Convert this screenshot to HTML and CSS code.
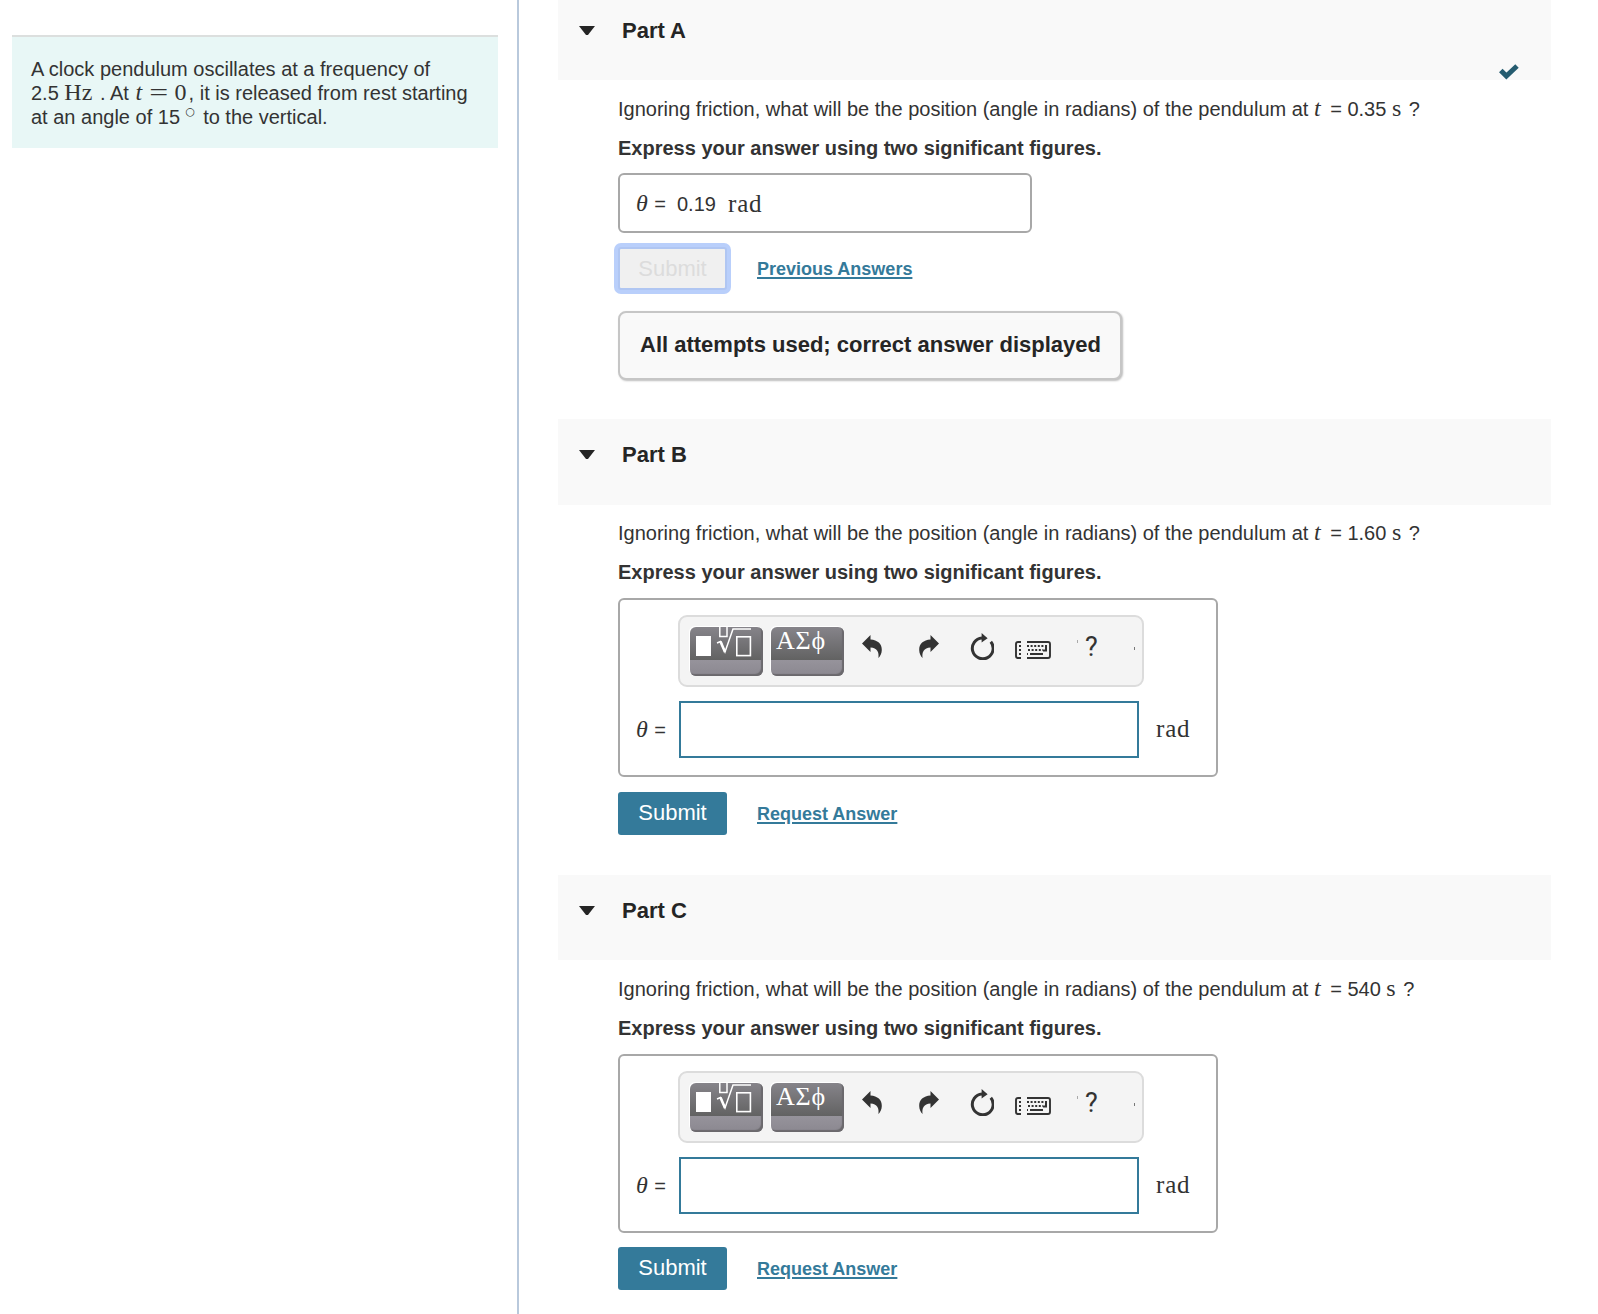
FILE: index.html
```html
<!DOCTYPE html>
<html lang="en">
<head>
    <meta charset="UTF-8">
    <meta name="viewport" content="width=device-width, initial-scale=1.0">
    <title>Clock Pendulum</title>
    <link rel="stylesheet" href="styles.css">
</head>
<body>
    <!-- Shared toolbar icons -->
    <svg class="sprite" width="0" height="0">
        <symbol id="icon-undo" viewBox="0 0 20 23">
            <path d="M0 8.5 L8.5 0 V4.6 C15.5 5 20 9 19.8 15 C19.7 18.4 18.4 21 16.4 23 C17.3 17.5 15.2 12.7 8.5 12.6 V17 Z"/>
        </symbol>
        <symbol id="icon-reset" viewBox="0 0 24 27">
            <path d="M12 5 A10.4 10.4 0 1 0 20.8 8.8" fill="none" stroke="#333" stroke-width="3"/>
            <path d="M11.6 0 L17.6 5.2 L11.6 9.6 Z"/>
        </symbol>
        <symbol id="icon-keyboard" viewBox="0 0 36 18">
            <path d="M6 1 H3 Q1 1 1 3 V15 Q1 17 3 17 H6 M12 1 H33 Q35 1 35 3 V15 Q35 17 33 17 H12" fill="none" stroke="#333" stroke-width="1.9"/>
            <path d="M4 5 H6 M12 5 H29 M4 9 H6 M13 9 H28 M4 13 H6 M12 13 H13" fill="none" stroke="#333" stroke-width="2" stroke-dasharray="2 1.6"/>
            <path d="M15 13 H28 M31 4 V9.5 H28" fill="none" stroke="#333" stroke-width="2"/>
        </symbol>
        <symbol id="icon-template" viewBox="0 0 72 48">
            <rect x="6" y="9" width="15" height="20" fill="#fff"/>
            <path d="M29.8 -1 V9.5 H37 V-1 M27 16 L30.5 14.5 L35 25 L43 2 H61" fill="none" stroke="#fff" stroke-width="1.5"/>
            <path d="M30.5 14.5 L35 25" fill="none" stroke="#fff" stroke-width="2.6"/>
            <rect x="46.8" y="9.8" width="13.6" height="18.8" fill="none" stroke="#fff" stroke-width="1.6"/>
        </symbol>
    </svg>

    <div class="problem">
        <div class="intro">
            A clock pendulum oscillates at a frequency of<br>
            2.5 <span class="math hz">Hz</span> . At <span class="math zero"><i>t</i><span class="eq">=</span>0</span>, it is released from rest starting<br>
            at an angle of 15 <span class="degree">&#9675;</span> to the vertical.
        </div>
    </div>

    <div class="parts">
        <div class="part">
            <div class="part-header first">
                <span class="arrow"></span>
                <h2>Part A</h2>
                <svg class="check" width="20" height="16" viewBox="0 0 20 16"><path d="M1.8 6.4 L7.4 12 L18 2" fill="none" stroke="#255c70" stroke-width="5"/></svg>
            </div>
            <div class="part-body">
                <p class="question">Ignoring friction, what will be the position (angle in radians) of the pendulum at <i class="math var">t</i> = 0.35 <span class="math sec">s</span> ?</p>
                <p class="hint">Express your answer using two significant figures.</p>
                <div class="answer-box given">
                    <span class="label"><i class="math theta">&theta;</i> =</span>
                    <span class="value">0.19</span>
                    <span class="math unit">rad</span>
                </div>
                <div class="actions">
                    <button class="submit" disabled>Submit</button>
                    <a href="#">Previous Answers</a>
                </div>
                <div class="feedback">All attempts used; correct answer displayed</div>
            </div>
        </div>

        <div class="part part-b">
            <div class="part-header">
                <span class="arrow"></span>
                <h2>Part B</h2>
            </div>
            <div class="part-body">
                <p class="question">Ignoring friction, what will be the position (angle in radians) of the pendulum at <i class="math var">t</i> = 1.60 <span class="math sec">s</span> ?</p>
                <p class="hint">Express your answer using two significant figures.</p>
                <div class="answer-box entry">
                    <div class="toolbar">
                        <div class="key"><svg width="72" height="48"><use href="#icon-template"/></svg></div>
                        <div class="key greek">&Alpha;&Sigma;&#981;</div>
                        <svg class="undo" width="20" height="23"><use href="#icon-undo"/></svg>
                        <svg class="redo" width="20" height="23"><use href="#icon-undo"/></svg>
                        <svg class="reset" width="24" height="27"><use href="#icon-reset"/></svg>
                        <svg class="keyboard" width="36" height="18"><use href="#icon-keyboard"/></svg>
                        <span class="tick"></span>
                        <span class="help">?</span>
                        <span class="tick last"></span>
                    </div>
                    <div class="entry-row">
                        <span class="label"><i class="math theta">&theta;</i> =</span>
                        <input type="text">
                        <span class="math unit">rad</span>
                    </div>
                </div>
                <div class="actions">
                    <button class="submit">Submit</button>
                    <a href="#">Request Answer</a>
                </div>
            </div>
        </div>

        <div class="part part-c">
            <div class="part-header">
                <span class="arrow"></span>
                <h2>Part C</h2>
            </div>
            <div class="part-body">
                <p class="question">Ignoring friction, what will be the position (angle in radians) of the pendulum at <i class="math var">t</i> = 540 <span class="math sec">s</span> ?</p>
                <p class="hint">Express your answer using two significant figures.</p>
                <div class="answer-box entry">
                    <div class="toolbar">
                        <div class="key"><svg width="72" height="48"><use href="#icon-template"/></svg></div>
                        <div class="key greek">&Alpha;&Sigma;&#981;</div>
                        <svg class="undo" width="20" height="23"><use href="#icon-undo"/></svg>
                        <svg class="redo" width="20" height="23"><use href="#icon-undo"/></svg>
                        <svg class="reset" width="24" height="27"><use href="#icon-reset"/></svg>
                        <svg class="keyboard" width="36" height="18"><use href="#icon-keyboard"/></svg>
                        <span class="tick"></span>
                        <span class="help">?</span>
                        <span class="tick last"></span>
                    </div>
                    <div class="entry-row">
                        <span class="label"><i class="math theta">&theta;</i> =</span>
                        <input type="text">
                        <span class="math unit">rad</span>
                    </div>
                </div>
                <div class="actions">
                    <button class="submit">Submit</button>
                    <a href="#">Request Answer</a>
                </div>
            </div>
        </div>
    </div>
</body>
</html>
```
FILE: styles.css
```css
* {
    margin: 0;
    padding: 0;
    box-sizing: border-box;
}

body {
    display: flex;
    height: 1314px;
    overflow: hidden;
    background-color: #FFF;
    color: #333;
    font-family: "Liberation Sans", Arial, sans-serif;
    font-size: 20px;
    line-height: 24px;
}

.sprite {
    position: absolute;
}

.math {
    font-family: "Liberation Serif", "Times New Roman", serif;
    font-size: 24px;
    line-height: 20px;
}

/* Problem statement */
.problem {
    width: 519px;
    flex: none;
    padding: 35px 19px 0 12px;
    border-right: 2px solid #B9C9DC;
}

.intro {
    height: 113px;
    padding: 20px 0 0 19px;
    border-top: 2px solid #DCDFDE;
    background-color: #E8F7F6;
    white-space: nowrap;
}

.hz {
    margin-right: 2px;
}

.zero {
    margin: 0 2px 0 1px;
}

.eq {
    display: inline-block;
    margin: 0 9px 0 10px;
    transform: scaleX(1.4);
}

.degree {
    display: inline-block;
    width: 12px;
    font-family: "DejaVu Sans", sans-serif;
    font-size: 11px;
    line-height: 10px;
    vertical-align: 9px;
}

/* Parts */
.parts {
    width: 993px;
    margin-left: 39px;
}

.part-header {
    position: relative;
    display: flex;
    height: 86px;
    padding: 23px 0 0 21px;
    background-color: #F9F9F9;
}

.part-header.first {
    height: 80px;
    padding-top: 18px;
}

.arrow {
    width: 16px;
    height: 9px;
    margin-top: 8px;
    background-color: #252525;
    clip-path: polygon(0 0, 100% 0, 56% 100%, 44% 100%);
}

h2 {
    margin-left: 27px;
    color: #252525;
    font-size: 22px;
    line-height: 25px;
}

.check {
    position: absolute;
    right: 32px;
    bottom: 0;
}

.part-body {
    padding: 17px 0 0 60px;
}

.question {
    height: 24px;
    white-space: nowrap;
}

.var {
    margin-right: 4px;
}

.sec {
    margin-right: 2px;
}

.hint {
    margin-top: 15px;
    font-weight: bold;
}

.answer-box {
    border: 2px solid #A8A8A8;
    border-radius: 6px;
}

.given {
    display: flex;
    align-items: center;
    width: 414px;
    height: 60px;
    margin-top: 13px;
    padding: 1px 0 0 16px;
}

.given .label {
    width: 41px;
}

.label {
    width: 43px;
    white-space: nowrap;
}

.theta {
    margin-right: 1px;
}

.unit {
    font-size: 25px;
    letter-spacing: 0.8px;
}

.value {
    width: 51px;
}

.actions {
    display: flex;
    align-items: center;
    gap: 30px;
    height: 43px;
    margin-top: 14px;
}

.submit {
    width: 109px;
    height: 43px;
    border: 0;
    border-radius: 3px;
    background-color: #347A9A;
    color: #FFF;
    font-family: inherit;
    font-size: 22px;
    padding-bottom: 2px;
}

.submit:disabled {
    padding-bottom: 0;
    border: 2px solid #B0C6F2;
    background-color: #F0F0F0;
    color: #DCDCDC;
    box-shadow: 0 0 0 4px #B9CFFB;
}

.actions a {
    color: #347A9A;
    font-size: 18px;
    font-weight: bold;
    text-decoration-thickness: 2px;
    text-underline-offset: 2px;
}

.feedback {
    width: 504px;
    height: 69px;
    margin-top: 21px;
    padding-left: 20px;
    border: 2px solid #C6C6C6;
    border-radius: 8px;
    background-color: #F9F9F9;
    box-shadow: 1px 1px 2px #BDBDBD;
    color: #252525;
    font-size: 22px;
    font-weight: bold;
    line-height: 64px;
    white-space: nowrap;
}

/* Answer entry */
.part-b {
    margin-top: 39px;
}

.part-b .part-body {
    padding-top: 16px;
}

.part-c {
    margin-top: 40px;
}

.part-c .part-header {
    height: 85px;
}

.entry {
    width: 600px;
    height: 179px;
    margin-top: 14px;
}

.toolbar {
    display: flex;
    align-items: flex-start;
    width: 466px;
    height: 72px;
    margin: 15px 0 0 58px;
    padding: 10px 0 0 10px;
    border: 2px solid #DCDCDC;
    border-radius: 9px;
    background-color: #F4F4F4;
    fill: #333;
}

.key {
    flex: none;
    width: 73px;
    height: 49px;
    margin-right: 8px;
    overflow: hidden;
    border-radius: 6px;
    background: linear-gradient(#86848A 0, #626262 33px, #96939B 33px, #8B8890 100%);
    box-shadow: -1px -1px 0 #FFF, inset -2px -2px 1px #6B696D;
}

.greek {
    padding-left: 5px;
    color: #FFF;
    font-family: "Liberation Serif", serif;
    font-size: 26px;
    letter-spacing: 0.8px;
    line-height: 28px;
}

.undo {
    margin: 8px 0 0 10px;
}

.redo {
    margin: 8px 0 0 37px;
    transform: scaleX(-1);
}

.reset {
    margin: 6px 0 0 31px;
}

.keyboard {
    margin: 14px 0 0 21px;
}

.tick {
    width: 1px;
    height: 3px;
    margin: 13px 0 0 26px;
    background-color: #AAA;
}

.tick.last {
    margin: 20px 0 0 35px;
    background-color: #777;
}

.help {
    width: 14px;
    margin: 8px 0 0 7px;
    font-family: Roboto, sans-serif;
    font-size: 27px;
}

.entry-row {
    display: flex;
    align-items: center;
    margin-top: 14px;
    padding-left: 16px;
}

.entry-row input {
    width: 460px;
    height: 57px;
    border: 2px solid #347A9A;
}

.entry-row .unit {
    margin: 0 0 2px 17px;
}

.entry + .actions {
    margin-top: 15px;
}

.part-c .actions {
    margin-top: 14px;
}
```
